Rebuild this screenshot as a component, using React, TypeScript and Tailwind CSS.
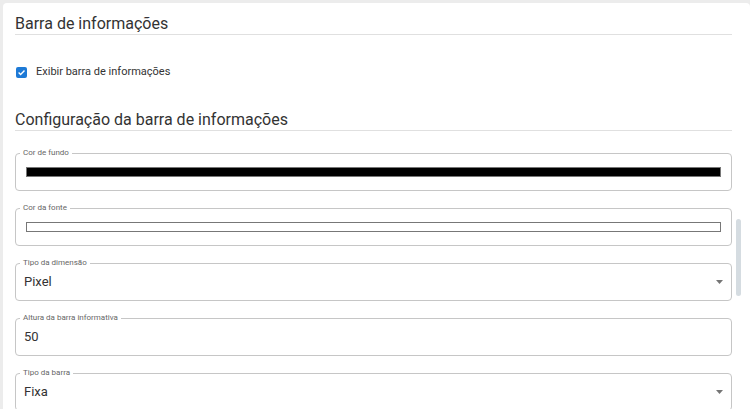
import React from "react";

function Legend({ text }: { text: string }) {
  return (
    <span className="absolute left-[4px] top-[-6px] bg-white px-[3px] text-[8px] leading-[10px] text-[#666]">
      {text}
    </span>
  );
}

function ColorField({ label, color }: { label: string; color: string }) {
  return (
    <div className="relative h-[38px] rounded-[4px] border border-[#c6c6c6] px-[10px] pt-[13px]">
      <Legend text={label} />
      <div className="h-[10px] border border-[#777]" style={{ backgroundColor: color }} />
    </div>
  );
}

function TextField({ label, value, select }: { label: string; value: string; select?: boolean }) {
  return (
    <div className="relative flex h-[38px] items-center rounded-[4px] border border-[#c6c6c6] pl-[8px] pr-[8px]">
      <Legend text={label} />
      <span className="text-[13px] leading-[16px] text-[#333]">{value}</span>
      {select && (
        <svg className="ml-auto" width="7" height="4" viewBox="0 0 7 4">
          <path d="M0 0 L7 0 L3.5 4 Z" fill="#757575" />
        </svg>
      )}
    </div>
  );
}

export default function App() {
  return (
    <div className="h-[409px] w-[750px] overflow-hidden bg-[#ececec] pl-[3px] pt-[3px] font-[Roboto,sans-serif]">
      <div className="relative h-full rounded-t-[4px] bg-white pl-[12px] pr-[18px] pt-[11px]">
        <h2 className="h-[21px] border-b border-[#e0e0e0] text-[16px] font-normal leading-[20px] text-[#333]">
          Barra de informações
        </h2>

        <div className="mt-[31px] flex h-[12px] items-center">
          <span className="ml-[1px] flex h-[11px] w-[11px] items-center justify-center rounded-[2px] bg-[#1e7ad6]">
            <svg width="9" height="9" viewBox="0 0 9 9">
              <path d="M1.6 4.6 L3.6 6.5 L7.5 2.4" fill="none" stroke="white" strokeWidth="1.4" />
            </svg>
          </span>
          <span className="ml-[9px] text-[11px] leading-[12px] text-[#333]">Exibir barra de informações</span>
        </div>

        <h2 className="mt-[31px] h-[22px] border-b border-[#e0e0e0] text-[16px] font-normal leading-[21px] text-[#333]">
          Configuração da barra de informações
        </h2>

        <div className="mt-[22px] flex flex-col gap-[17px]">
          <ColorField label="Cor de fundo" color="#000000" />
          <ColorField label="Cor da fonte" color="#ffffff" />
          <TextField label="Tipo da dimensão" value="Pixel" select />
          <TextField label="Altura da barra informativa" value="50" />
          <TextField label="Tipo da barra" value="Fixa" select />
        </div>

        <div className="absolute left-[733px] top-[216px] h-[77px] w-[5px] rounded-full bg-[#d5dce1]" />
      </div>
    </div>
  );
}
